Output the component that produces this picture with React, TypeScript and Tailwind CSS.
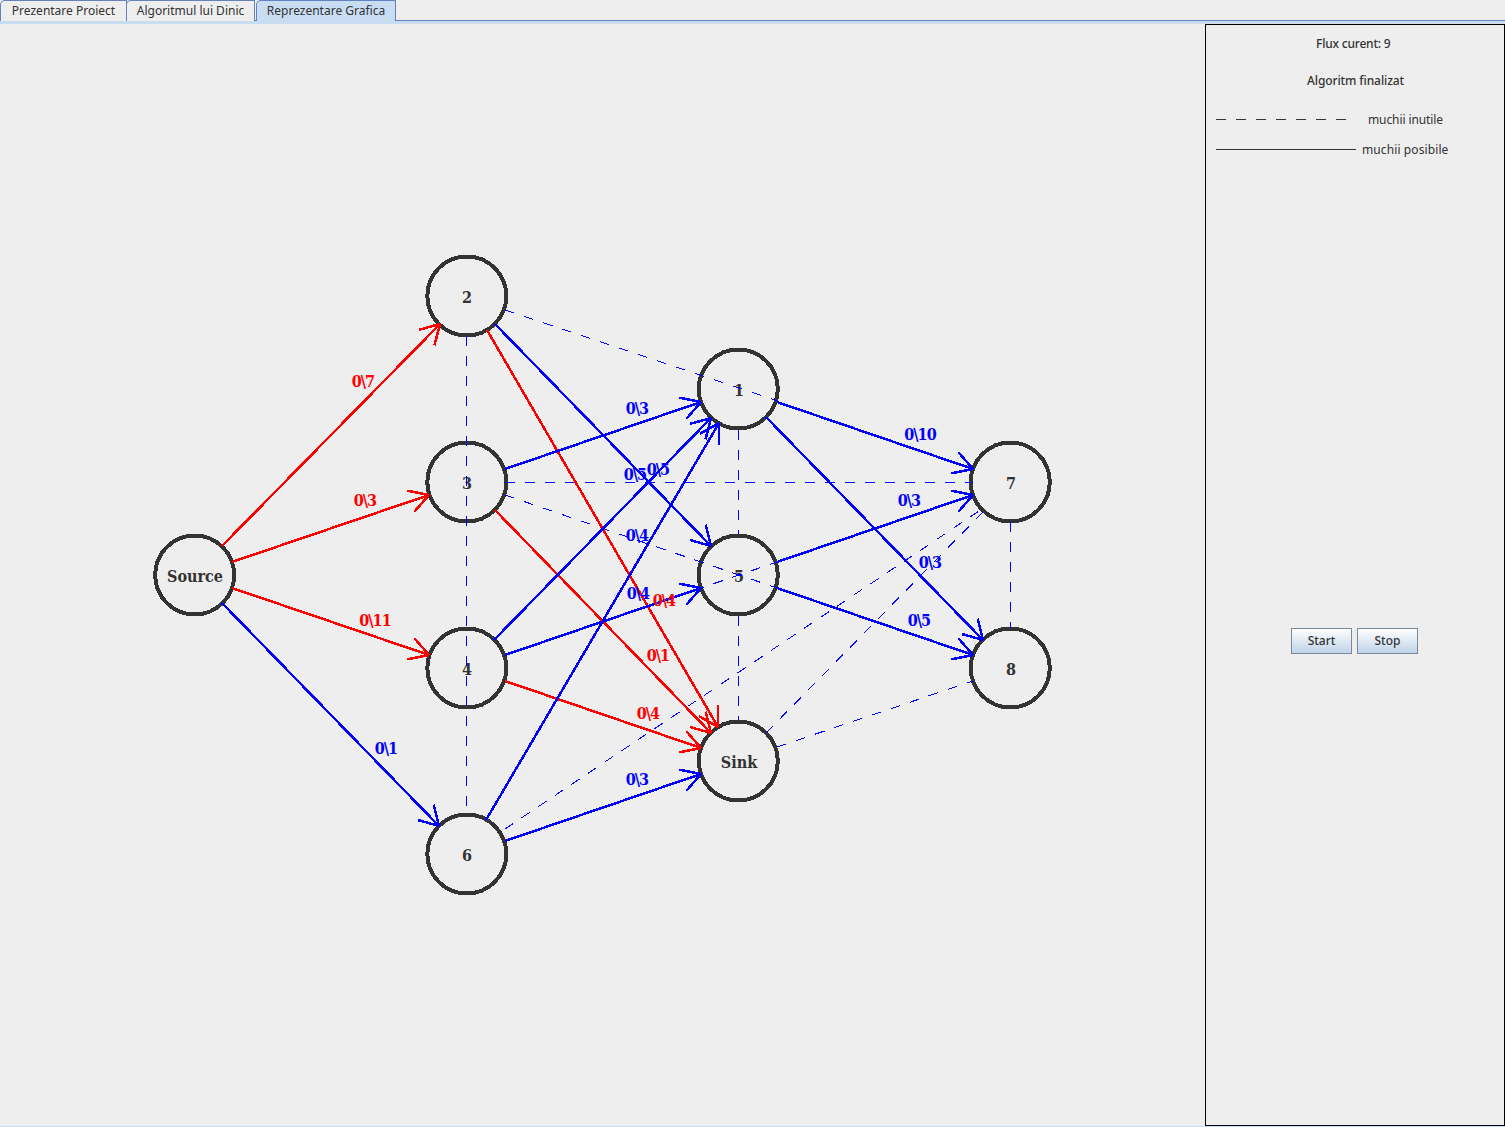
import React from "react";

type Pt = [number, number];

const RED = "#ff0000";
const BLUE = "#0000ff";

const nodes: { label: string; x: number; y: number; cx: number }[] = [
  { label: "Source", x: 195, y: 575, cx: 194.7 },
  { label: "2", x: 467, y: 296, cx: 466.8 },
  { label: "3", x: 467, y: 482, cx: 466.8 },
  { label: "4", x: 467, y: 668, cx: 466.8 },
  { label: "6", x: 467, y: 854, cx: 466.8 },
  { label: "1", x: 739, y: 389, cx: 738.3 },
  { label: "5", x: 739, y: 575, cx: 738.3 },
  { label: "Sink", x: 739, y: 761, cx: 738.3 },
  { label: "7", x: 1011, y: 482, cx: 1010.3 },
  { label: "8", x: 1011, y: 668, cx: 1010.3 },
];

// solid edges: from -> tip of the arrow
const arrows: { a: Pt; b: Pt; color: string }[] = [
  { a: [222, 546], b: [440, 324], color: RED },
  { a: [232, 562], b: [429, 495], color: RED },
  { a: [232, 588], b: [429, 655], color: RED },
  { a: [222, 603], b: [439, 826], color: BLUE },
  { a: [495, 324], b: [711, 546], color: BLUE },
  { a: [487, 330], b: [718, 727], color: RED },
  { a: [505, 469], b: [701, 402], color: BLUE },
  { a: [495, 510], b: [711, 733], color: RED },
  { a: [494, 640], b: [711, 418], color: BLUE },
  { a: [505, 655], b: [701, 588], color: BLUE },
  { a: [505, 681], b: [701, 748], color: RED },
  { a: [486, 820], b: [719, 423], color: BLUE },
  { a: [505, 841], b: [701, 774], color: BLUE },
  { a: [777, 402], b: [973, 469], color: BLUE },
  { a: [766, 417], b: [983, 640], color: BLUE },
  { a: [777, 562], b: [973, 495], color: BLUE },
  { a: [777, 588], b: [973, 655], color: BLUE },
];

const dashed: { a: Pt; b: Pt }[] = [
  { a: [505, 310], b: [778, 401] },
  { a: [505, 495], b: [777, 588] },
  { a: [505, 655], b: [777, 562] },
  { a: [505, 482], b: [973, 482] },
  { a: [466, 336], b: [466, 814] },
  { a: [738, 430], b: [738, 534] },
  { a: [738, 616], b: [738, 720] },
  { a: [1010, 522], b: [1010, 628] },
  { a: [505, 829], b: [985, 507] },
  { a: [766, 733], b: [985, 510] },
  { a: [777, 747], b: [973, 681] },
];

const edgeLabels: { t: string; x: number; y: number; color: string }[] = [
  { t: "0\\7", x: 363, y: 381, color: RED },
  { t: "0\\3", x: 365, y: 500, color: RED },
  { t: "0\\11", x: 375, y: 620, color: RED },
  { t: "0\\4", x: 664, y: 600, color: RED },
  { t: "0\\1", x: 658, y: 655, color: RED },
  { t: "0\\4", x: 648, y: 713, color: RED },
  { t: "0\\1", x: 386, y: 748, color: BLUE },
  { t: "0\\3", x: 637, y: 408, color: BLUE },
  { t: "0\\5", x: 635, y: 474, color: BLUE },
  { t: "0\\5", x: 658, y: 469, color: BLUE },
  { t: "0\\4", x: 637, y: 535, color: BLUE },
  { t: "0\\4", x: 638, y: 593, color: BLUE },
  { t: "0\\3", x: 637, y: 779, color: BLUE },
  { t: "0\\10", x: 920, y: 434, color: BLUE },
  { t: "0\\3", x: 909, y: 500, color: BLUE },
  { t: "0\\3", x: 930, y: 562, color: BLUE },
  { t: "0\\5", x: 919, y: 620, color: BLUE },
];

function barbs(a: Pt, b: Pt): Pt[] {
  const ang = Math.atan2(a[1] - b[1], a[0] - b[0]);
  const len = 22;
  const off = Math.PI / 6;
  return [
    [b[0] + len * Math.cos(ang + off), b[1] + len * Math.sin(ang + off)],
    [b[0] + len * Math.cos(ang - off), b[1] + len * Math.sin(ang - off)],
  ];
}

function Graph() {
  return (
    <svg viewBox="0 24 1205 1102" className="w-[1205px] h-[1102px] block shrink-0">
      {nodes.map((n) => (
        <g key={n.label}>
          <circle cx={n.cx} cy={n.y} r={39.5} fill="none" stroke="#333333" strokeWidth={4} shapeRendering="crispEdges" />
          <text
            x={n.x}
            y={n.y + 7}
            textAnchor="middle"
            fill="#333333"
            className="font-bold text-[16px] font-['DejaVu_Serif_Condensed','DejaVu_Serif',serif]"
          >
            {n.label}
          </text>
        </g>
      ))}
      <g shapeRendering="crispEdges">
        {dashed.map((d, i) => (
          <line
            key={i}
            x1={d.a[0]}
            y1={d.a[1]}
            x2={d.b[0]}
            y2={d.b[1]}
            stroke={BLUE}
            strokeWidth={1}
            strokeDasharray="10 10"
          />
        ))}
        {arrows.map((e, i) => {
          const [p, q] = barbs(e.a, e.b);
          return (
            <g key={i} stroke={e.color} strokeWidth={2.5}>
              <line x1={e.a[0]} y1={e.a[1]} x2={e.b[0]} y2={e.b[1]} />
              <line x1={e.b[0]} y1={e.b[1]} x2={p[0]} y2={p[1]} />
              <line x1={e.b[0]} y1={e.b[1]} x2={q[0]} y2={q[1]} />
            </g>
          );
        })}
      </g>
      {edgeLabels.map((l, i) => (
        <text
          key={i}
          x={l.x}
          y={l.y + 6}
          textAnchor="middle"
          fill={l.color}
          className="font-bold text-[16px] tracking-[-1px] font-['DejaVu_Serif_Condensed','DejaVu_Serif',serif]"
        >
          {l.t}
        </text>
      ))}
    </svg>
  );
}

function Tab({ label, active, w }: { label: string; active?: boolean; w: string }) {
  return (
    <div
      className={`${w} h-[21px] flex items-center justify-center border border-b-0 border-[#6382bf] rounded-tl-[5px] text-[12px] leading-none pb-px text-[#333333] ${
        active ? "bg-[#c8ddf2]" : "bg-[#eeeeee]"
      }`}
    >
      {label}
    </div>
  );
}

function SidePanel() {
  return (
    <div className="w-[300px] h-[1102px] border border-black flex flex-col text-[12px] leading-[16px] text-[#333333]">
      <div className="pt-[11px] pl-[110px] font-medium tracking-[-0.2px]">Flux curent: 9</div>
      <div className="pt-[21px] pl-[101px] font-medium tracking-[-0.1px]">Algoritm finalizat</div>
      <div className="mt-[23px] pl-[10px] flex items-center h-[16px]">
        <svg width="140" height="1" className="block shrink-0 mb-[2px]">
          <line x1="0" y1="0.5" x2="140" y2="0.5" stroke="#333333" strokeDasharray="10 10" />
        </svg>
        <span className="ml-[12px] tracking-[-0.1px]">muchii inutile</span>
      </div>
      <div className="mt-[14px] pl-[10px] flex items-center h-[16px]">
        <div className="w-[140px] h-px bg-[#333333] shrink-0 mb-[2px]" />
        <span className="ml-[6px] tracking-[0.1px]">muchii posibile</span>
      </div>
      <div className="mt-[470px] flex justify-center gap-[5px] pr-px">
        {["Start", "Stop"].map((b) => (
          <div
            key={b}
            className="w-[61px] h-[26px] flex items-center justify-center border border-[#7a8a99] bg-gradient-to-b from-white to-[#c0d3e8] font-medium"
          >
            {b}
          </div>
        ))}
      </div>
    </div>
  );
}

export default function App() {
  return (
    <div className="w-[1505px] h-[1127px] bg-[#eeeeee] overflow-hidden flex flex-col font-['Noto_Sans',sans-serif]">
      <div className="h-[24px] shrink-0 border-b-[3px] border-[#c8ddf2]">
        <div className="h-[21px] flex items-start border-b border-[#6382bf]">
          <Tab label="Prezentare Proiect" w="w-[127px]" />
          <Tab label="Algoritmul lui Dinic" w="w-[129px] -ml-px" />
          <Tab label="Reprezentare Grafica" w="w-[140px] ml-px" active />
        </div>
      </div>
      <div className="flex flex-1">
        <Graph />
        <SidePanel />
      </div>
      <div className="h-px bg-[#c8ddf2] shrink-0" />
    </div>
  );
}
